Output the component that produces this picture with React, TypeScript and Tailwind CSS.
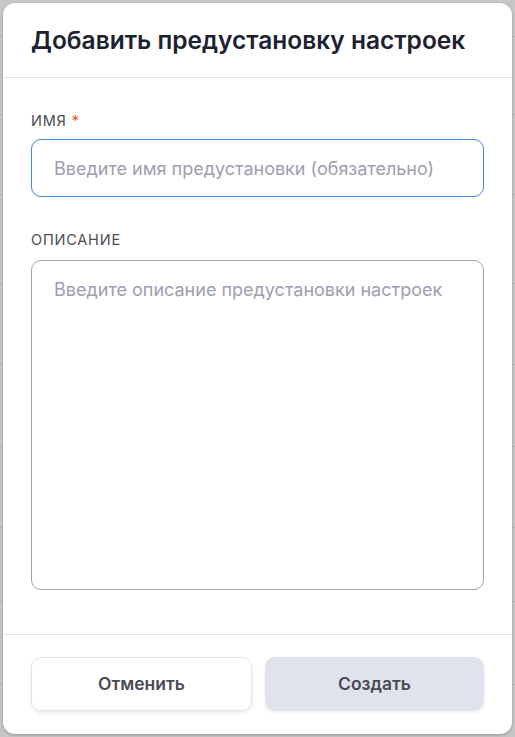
import React from 'react';

const rows = [36, 114, 194, 283, 364, 446, 527, 601, 684];

export default function App() {
  return (
    <div className="relative w-[515px] h-[737px] bg-[#c6c6c8] overflow-hidden" style={{ fontFamily: 'Inter, "Noto Sans", sans-serif' }}>
      {rows.map((y) => (
        <div key={y} className="absolute left-0 right-0 h-px bg-[#b4b4b8]" style={{ top: y }} />
      ))}
      <div className="absolute left-[3px] top-[3px] w-[509px] h-[731px] bg-white rounded-[12px] flex flex-col shadow-[0_1px_3px_rgba(0,0,0,0.25)]">
        <div className="h-[75px] px-[28px] flex items-center border-b border-[#e2e2ea]">
          <h2 className="text-[24.5px] font-semibold text-[#1c2230]">Добавить предустановку настроек</h2>
        </div>
        <div className="flex-1 px-[28px] pt-[33px] flex flex-col">
          <label className="text-[14.5px] leading-[20px] tracking-[0.8px] text-[#4b4b52] uppercase">
            Имя <span className="text-[#f05a28]">*</span>
          </label>
          <div className="mt-[8px] h-[58px] rounded-[10px] border border-[#3a86f0] flex items-center px-[22px]">
            <span className="text-[18px] text-[#9e9eb0]">Введите имя предустановки (обязательно)</span>
          </div>
          <label className="mt-[33px] text-[14.5px] leading-[20px] tracking-[0.8px] text-[#4b4b52] uppercase">
            Описание
          </label>
          <div className="mt-[10px] h-[330px] rounded-[10px] border border-[#a2a2b2] px-[22px] pt-[15px]">
            <span className="text-[18px] text-[#9e9eb0]">Введите описание предустановки настроек</span>
          </div>
        </div>
        <div className="h-[100px] border-t border-[#e2e2ea] px-[28px] pt-[22px] flex gap-[13px]">
          <button className="flex-1 h-[54px] rounded-[10px] bg-white border border-[#e4e4ec] shadow-[0_2px_4px_rgba(0,0,0,0.08)] text-[17.5px] font-semibold text-[#4a4a54]">
            Отменить
          </button>
          <button className="flex-1 h-[54px] rounded-[10px] bg-[#e0e3eb] shadow-[0_2px_4px_rgba(0,0,0,0.06)] text-[17.5px] font-semibold text-[#4a4a54]">
            Создать
          </button>
        </div>
      </div>
    </div>
  );
}
